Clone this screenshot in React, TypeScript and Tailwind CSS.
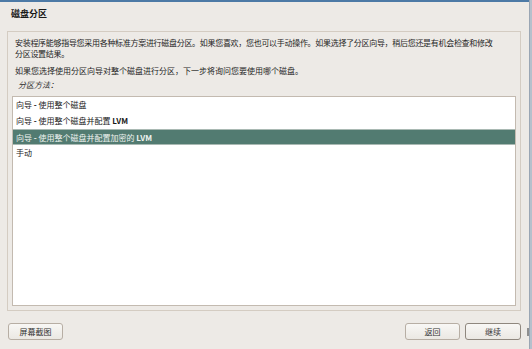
import React from "react";

const font = { fontFamily: '"Noto Sans CJK SC", "Noto Sans", sans-serif' };

function Row({ children, selected }: { children: React.ReactNode; selected?: boolean }) {
  return (
    <div
      className={
        selected
          ? "h-[16px] leading-[15px] pl-[3px] bg-[#527b71] text-[#eef3f0] border-y border-[#a9b9b3] whitespace-nowrap"
          : "h-[16px] leading-[16px] pl-[3px] text-[#1a1a1a] whitespace-nowrap"
      }
    >
      {children}
    </div>
  );
}

export default function App() {
  return (
    <div className="w-[532px] h-[349px] bg-[#edeae6] flex flex-row overflow-hidden text-[8px] text-[#1e1e1e]" style={font}>
      <div className="w-[529px] flex flex-col relative">
        <div className="h-[2px] bg-[#4d7aa6]" />
        <div className="mt-[6px] pl-[11px] h-[12px] leading-[12px] text-[9px] font-bold text-[#1a1a1a]">磁盘分区</div>
        <div className="mt-[11px] ml-[7px] w-[514px] h-[280px] border border-[#d4ccc2] px-[4px] flex flex-col">
          <div className="pt-[5px] pl-[3px] leading-[11px] whitespace-nowrap tracking-[-0.3px]">
            安装程序能够指导您采用各种标准方案进行磁盘分区。如果您喜欢，您也可以手动操作。如果选择了分区向导，稍后您还是有机会检查和修改
            <br />
            分区设置结果。
          </div>
          <div className="mt-[6px] pl-[3px] leading-[11px] whitespace-nowrap">如果您选择使用分区向导对整个磁盘进行分区，下一步将询问您要使用哪个磁盘。</div>
          <div className="mt-[3px] pl-[6px] leading-[11px] italic">分区方法：</div>
          <div className="mt-[6px] h-[210px] border border-[#c3bab0] bg-white flex flex-col">
            <Row>
              向导 <b>-</b> 使用整个磁盘
            </Row>
            <Row>
              向导 <b>-</b> 使用整个磁盘并配置 <b>LVM</b>
            </Row>
            <Row selected>
              向导 <b>-</b> 使用整个磁盘并配置加密的 <b>LVM</b>
            </Row>
            <Row>手动</Row>
          </div>
        </div>
        <div className="mt-[12px] px-[8px] flex flex-row items-center">
          <button className="w-[55px] h-[17px] rounded-[3px] border border-[#b7aea4] bg-gradient-to-b from-[#f8f7f5] to-[#ebe8e3] text-[8px] leading-[15px] text-[#333]">屏幕截图</button>
          <div className="flex-1" />
          <button className="w-[55px] h-[17px] rounded-[3px] border border-[#b7aea4] bg-gradient-to-b from-[#f8f7f5] to-[#ebe8e3] text-[8px] leading-[15px] text-[#333]">返回</button>
          <button className="ml-[5px] w-[56px] h-[17px] rounded-[3px] border border-[#8f877e] bg-gradient-to-b from-[#f8f7f5] to-[#ebe8e3] text-[8px] leading-[15px] text-[#333]">继续</button>
        </div>
        <div className="absolute right-0 top-[328px] w-[2px] h-[8px] bg-[#8f8f8f]" />
      </div>
      <div className="w-[3px] bg-[#b6c0cc] border-l border-[#9aa6b4]" />
    </div>
  );
}
